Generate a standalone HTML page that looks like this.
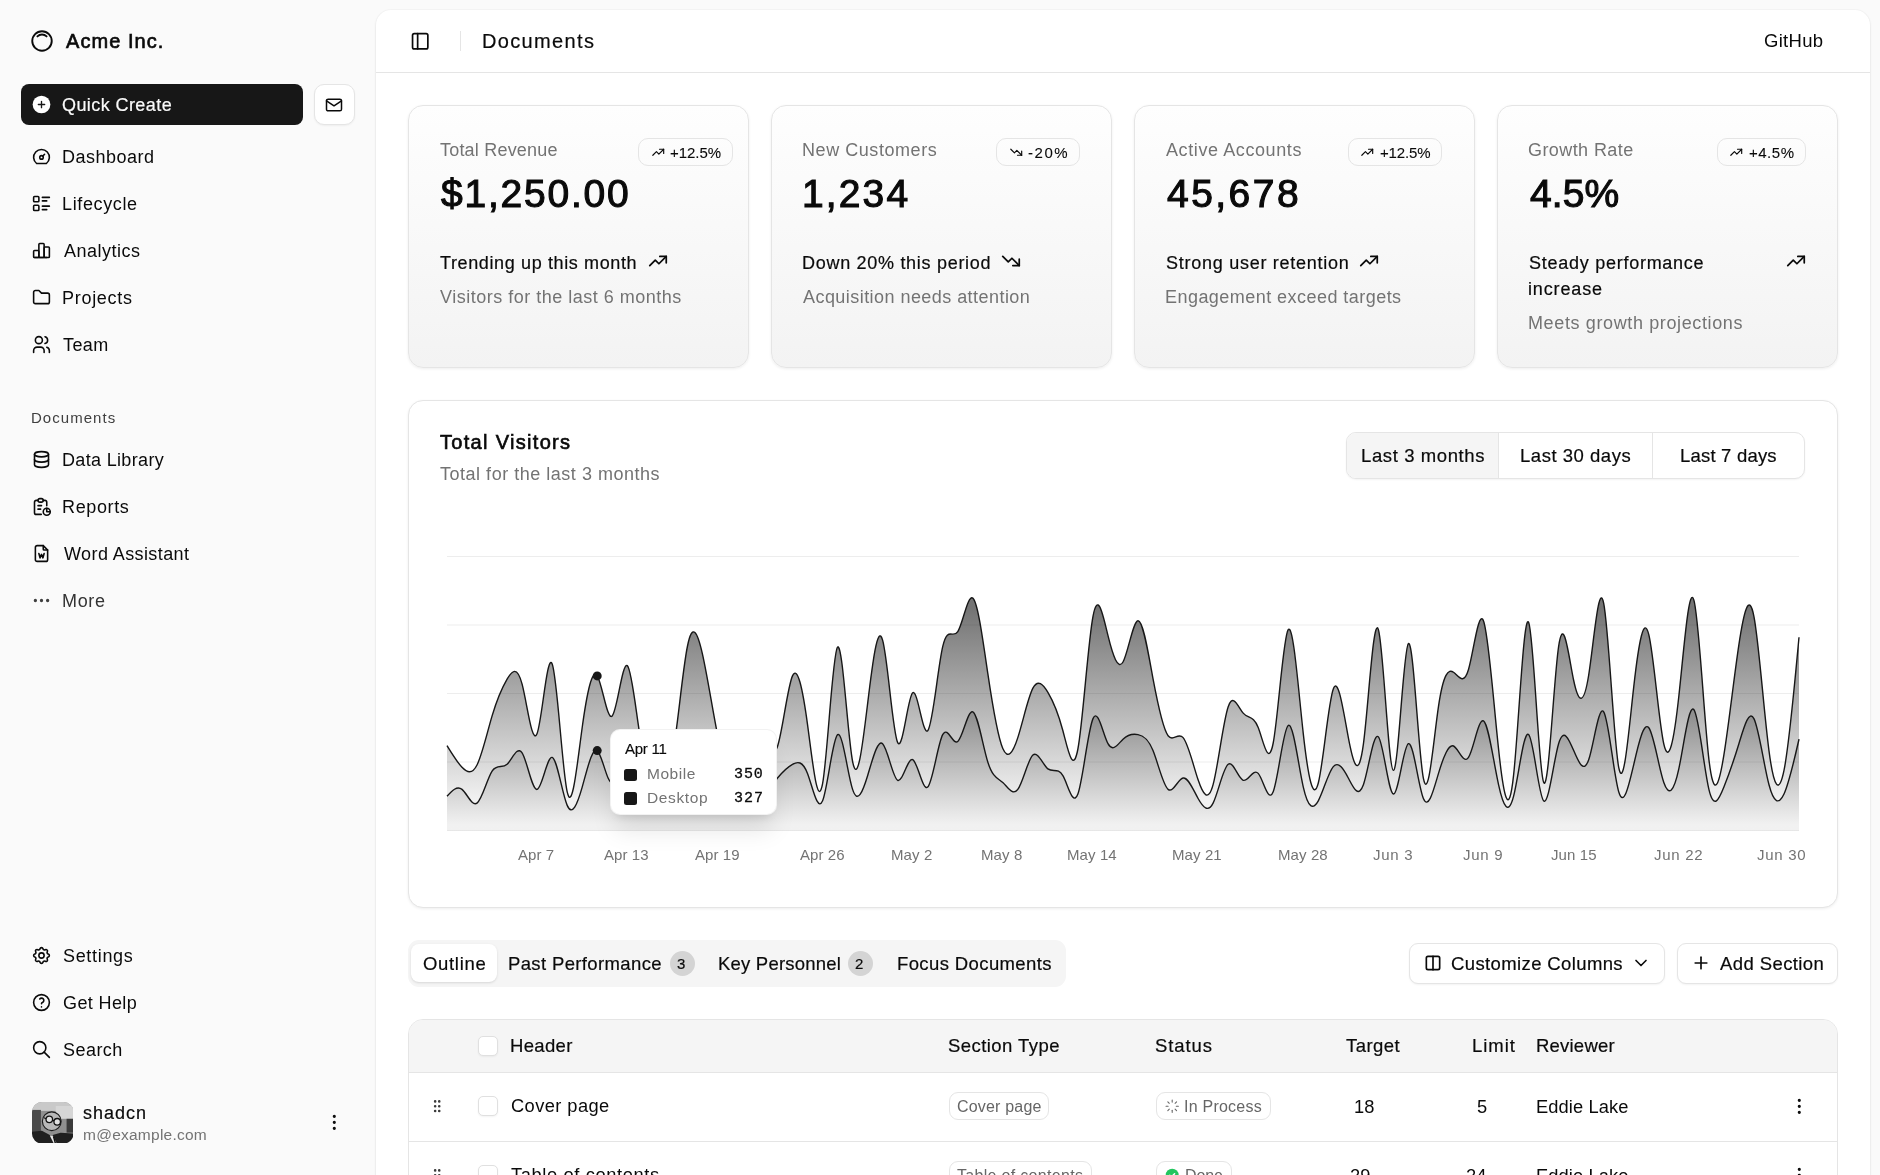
<!DOCTYPE html>
<html><head><meta charset="utf-8"><style>
html,body{margin:0;padding:0;}
body{width:1880px;height:1175px;overflow:hidden;position:relative;background:#fafafa;font-family:"Liberation Sans",sans-serif;color:#0a0a0a;}
.t{position:absolute;white-space:nowrap;line-height:1;will-change:transform;}
#inset{position:absolute;left:376px;top:10px;width:1494px;height:1200px;background:#fff;border-radius:15px;box-shadow:0 1px 3px rgba(0,0,0,.08),0 0 0 1px rgba(0,0,0,.02);}
</style></head><body>
<svg style="position:absolute;left:28.6px;top:27.9px" width="26" height="26" viewBox="0 0 24 24" fill="none" stroke="#0a0a0a" stroke-width="1.75" stroke-linecap="round" stroke-linejoin="round"><path d="M5.636 5.636a9 9 0 1 0 12.728 12.728a9 9 0 0 0 -12.728 -12.728z"/><path d="M16.243 7.757a6 6 0 0 0 -8.486 0"/></svg>
<div class="t" style="left:66.3px;top:31.37px;font-size:20px;color:#0a0a0a;letter-spacing:1.044px;-webkit-text-stroke:0.65px currentColor;">Acme Inc.</div>
<div style="position:absolute;left:21px;top:84px;width:282px;height:41px;background:#171717;border-radius:8px;"></div>
<svg style="position:absolute;left:32.2px;top:94.6px" width="19" height="19" viewBox="0 0 24 24"><circle cx="12" cy="12" r="11.2" fill="#fff"/><path d="M12 8v8M8 12h8" stroke="#171717" stroke-width="1.7" stroke-linecap="round"/></svg>
<div class="t" style="left:62.3px;top:95.56px;font-size:18px;color:#fafafa;letter-spacing:0.419px;-webkit-text-stroke:0.2px currentColor;">Quick Create</div>
<div style="position:absolute;left:313.5px;top:84px;width:41.0px;height:41px;background:#fff;border:1px solid #e5e5e5;box-sizing:border-box;border-radius:10px;box-shadow:0 1px 2px rgba(0,0,0,.05);"></div>
<svg style="position:absolute;left:324.0px;top:94.5px" width="20" height="20" viewBox="0 0 24 24" fill="none" stroke="#0a0a0a" stroke-width="1.8" stroke-linecap="round" stroke-linejoin="round"><path d="M3 7a2 2 0 0 1 2 -2h14a2 2 0 0 1 2 2v10a2 2 0 0 1 -2 2h-14a2 2 0 0 1 -2 -2v-10z"/><path d="M3 7l9 6l9 -6"/></svg>
<svg style="position:absolute;left:30.5px;top:145.5px" width="21" height="21" viewBox="0 0 24 24" fill="none" stroke="#0a0a0a" stroke-width="1.8" stroke-linecap="round" stroke-linejoin="round"><path d="M12 13m-2 0a2 2 0 1 0 4 0a2 2 0 1 0 -4 0"/><path d="M13.45 11.55l2.05 -2.05"/><path d="M6.4 20a9 9 0 1 1 11.2 0z"/></svg>
<div class="t" style="left:62.1px;top:147.86px;font-size:18px;color:#0a0a0a;letter-spacing:0.497px;">Dashboard</div>
<svg style="position:absolute;left:30.5px;top:192.5px" width="21" height="21" viewBox="0 0 24 24" fill="none" stroke="#0a0a0a" stroke-width="1.8" stroke-linecap="round" stroke-linejoin="round"><path d="M13 5h8"/><path d="M13 9h5"/><path d="M13 15h8"/><path d="M13 19h5"/><path d="M3 4m0 1a1 1 0 0 1 1 -1h4a1 1 0 0 1 1 1v4a1 1 0 0 1 -1 1h-4a1 1 0 0 1 -1 -1z"/><path d="M3 14m0 1a1 1 0 0 1 1 -1h4a1 1 0 0 1 1 1v4a1 1 0 0 1 -1 1h-4a1 1 0 0 1 -1 -1z"/></svg>
<div class="t" style="left:62.1px;top:194.86px;font-size:18px;color:#0a0a0a;letter-spacing:0.630px;">Lifecycle</div>
<svg style="position:absolute;left:30.5px;top:239.5px" width="21" height="21" viewBox="0 0 24 24" fill="none" stroke="#0a0a0a" stroke-width="1.8" stroke-linecap="round" stroke-linejoin="round"><path d="M3 13a1 1 0 0 1 1 -1h4a1 1 0 0 1 1 1v6a1 1 0 0 1 -1 1h-4a1 1 0 0 1 -1 -1z"/><path d="M15 9a1 1 0 0 1 1 -1h4a1 1 0 0 1 1 1v10a1 1 0 0 1 -1 1h-4a1 1 0 0 1 -1 -1z"/><path d="M9 5a1 1 0 0 1 1 -1h4a1 1 0 0 1 1 1v14a1 1 0 0 1 -1 1h-4a1 1 0 0 1 -1 -1z"/><path d="M4 20h14"/></svg>
<div class="t" style="left:63.6px;top:241.86px;font-size:18px;color:#0a0a0a;letter-spacing:0.495px;">Analytics</div>
<svg style="position:absolute;left:30.5px;top:286.5px" width="21" height="21" viewBox="0 0 24 24" fill="none" stroke="#0a0a0a" stroke-width="1.8" stroke-linecap="round" stroke-linejoin="round"><path d="M5 4h4l3 3h7a2 2 0 0 1 2 2v8a2 2 0 0 1 -2 2h-14a2 2 0 0 1 -2 -2v-11a2 2 0 0 1 2 -2"/></svg>
<div class="t" style="left:62.1px;top:288.86px;font-size:18px;color:#0a0a0a;letter-spacing:0.715px;">Projects</div>
<svg style="position:absolute;left:30.5px;top:333.5px" width="21" height="21" viewBox="0 0 24 24" fill="none" stroke="#0a0a0a" stroke-width="1.8" stroke-linecap="round" stroke-linejoin="round"><path d="M9 7m-4 0a4 4 0 1 0 8 0a4 4 0 1 0 -8 0"/><path d="M3 21v-2a4 4 0 0 1 4 -4h4a4 4 0 0 1 4 4v2"/><path d="M16 3.13a4 4 0 0 1 0 7.75"/><path d="M21 21v-2a4 4 0 0 0 -3 -3.85"/></svg>
<div class="t" style="left:63.2px;top:335.86px;font-size:18px;color:#0a0a0a;letter-spacing:0.425px;">Team</div>
<div class="t" style="left:31.2px;top:410.10px;font-size:15px;color:#3f3f3f;letter-spacing:1.038px;">Documents</div>
<svg style="position:absolute;left:30.5px;top:449.1px" width="21" height="21" viewBox="0 0 24 24" fill="none" stroke="#0a0a0a" stroke-width="1.8" stroke-linecap="round" stroke-linejoin="round"><path d="M12 6m-8 0a8 3 0 1 0 16 0a8 3 0 1 0 -16 0"/><path d="M4 6v6a8 3 0 0 0 16 0v-6"/><path d="M4 12v6a8 3 0 0 0 16 0v-6"/></svg>
<div class="t" style="left:62.1px;top:451.46px;font-size:18px;color:#0a0a0a;letter-spacing:0.333px;">Data Library</div>
<svg style="position:absolute;left:30.5px;top:496.1px" width="21" height="21" viewBox="0 0 24 24" fill="none" stroke="#0a0a0a" stroke-width="1.8" stroke-linecap="round" stroke-linejoin="round"><path d="M8 5h-2a2 2 0 0 0 -2 2v12a2 2 0 0 0 2 2h5.697"/><path d="M18 14v4h4"/><path d="M18 11v-4a2 2 0 0 0 -2 -2h-2"/><path d="M8 3m0 2a2 2 0 0 1 2 -2h2a2 2 0 0 1 2 2v0a2 2 0 0 1 -2 2h-2a2 2 0 0 1 -2 -2z"/><path d="M18 18m-4 0a4 4 0 1 0 8 0a4 4 0 1 0 -8 0"/><path d="M8 11h4"/><path d="M8 15h3"/></svg>
<div class="t" style="left:62.1px;top:498.46px;font-size:18px;color:#0a0a0a;letter-spacing:0.633px;">Reports</div>
<svg style="position:absolute;left:30.5px;top:543.1px" width="21" height="21" viewBox="0 0 24 24" fill="none" stroke="#0a0a0a" stroke-width="1.8" stroke-linecap="round" stroke-linejoin="round"><path d="M14 3v4a1 1 0 0 0 1 1h4"/><path d="M17 21h-10a2 2 0 0 1 -2 -2v-14a2 2 0 0 1 2 -2h7l5 5v11a2 2 0 0 1 -2 2z"/><path d="M9 12l1.333 5l1.667 -4l1.667 4l1.333 -5"/></svg>
<div class="t" style="left:63.5px;top:545.46px;font-size:18px;color:#0a0a0a;letter-spacing:0.407px;">Word Assistant</div>
<svg style="position:absolute;left:30.5px;top:590.1px" width="21" height="21" viewBox="0 0 24 24" fill="none" stroke="#404040" stroke-width="1.8" stroke-linecap="round" stroke-linejoin="round"><path d="M5 12m-1 0a1 1 0 1 0 2 0a1 1 0 1 0 -2 0"/><path d="M12 12m-1 0a1 1 0 1 0 2 0a1 1 0 1 0 -2 0"/><path d="M19 12m-1 0a1 1 0 1 0 2 0a1 1 0 1 0 -2 0"/></svg>
<div class="t" style="left:62.1px;top:592.46px;font-size:18px;color:#333;letter-spacing:0.655px;">More</div>
<svg style="position:absolute;left:30.5px;top:944.9px" width="21" height="21" viewBox="0 0 24 24" fill="none" stroke="#0a0a0a" stroke-width="1.8" stroke-linecap="round" stroke-linejoin="round"><path d="M10.325 4.317c.426 -1.756 2.924 -1.756 3.35 0a1.724 1.724 0 0 0 2.573 1.066c1.543 -.94 3.31 .826 2.37 2.37a1.724 1.724 0 0 0 1.065 2.572c1.756 .426 1.756 2.924 0 3.35a1.724 1.724 0 0 0 -1.066 2.573c.94 1.543 -.826 3.31 -2.37 2.37a1.724 1.724 0 0 0 -2.572 1.065c-.426 1.756 -2.924 1.756 -3.35 0a1.724 1.724 0 0 0 -2.573 -1.066c-1.543 .94 -3.31 -.826 -2.37 -2.37a1.724 1.724 0 0 0 -1.065 -2.572c-1.756 -.426 -1.756 -2.924 0 -3.35a1.724 1.724 0 0 0 1.066 -2.573c-.94 -1.543 .826 -3.31 2.37 -2.37c1 .608 2.296 .07 2.572 -1.065z"/><path d="M9 12a3 3 0 1 0 6 0a3 3 0 0 0 -6 0"/></svg>
<div class="t" style="left:62.8px;top:947.26px;font-size:18px;color:#0a0a0a;letter-spacing:0.675px;">Settings</div>
<svg style="position:absolute;left:30.5px;top:991.8px" width="21" height="21" viewBox="0 0 24 24" fill="none" stroke="#0a0a0a" stroke-width="1.8" stroke-linecap="round" stroke-linejoin="round"><path d="M12 12m-9 0a9 9 0 1 0 18 0a9 9 0 1 0 -18 0"/><path d="M12 17l0 .01"/><path d="M12 13.5a1.5 1.5 0 0 1 1 -1.5a2.6 2.6 0 1 0 -3 -4"/></svg>
<div class="t" style="left:62.7px;top:994.16px;font-size:18px;color:#0a0a0a;letter-spacing:0.390px;">Get Help</div>
<svg style="position:absolute;left:30.5px;top:1038.7px" width="21" height="21" viewBox="0 0 24 24" fill="none" stroke="#0a0a0a" stroke-width="1.8" stroke-linecap="round" stroke-linejoin="round"><path d="M10 10m-7 0a7 7 0 1 0 14 0a7 7 0 1 0 -14 0"/><path d="M21 21l-6 -6"/></svg>
<div class="t" style="left:62.8px;top:1041.06px;font-size:18px;color:#0a0a0a;letter-spacing:0.450px;">Search</div>
<svg style="position:absolute;left:31.5px;top:1101.5px" width="41.5" height="41.5" viewBox="0 0 42 42"><defs><clipPath id="av"><rect width="42" height="42" rx="10"/></clipPath></defs><g clip-path="url(#av)">
<rect width="42" height="42" fill="#8f8f8f"/><rect width="42" height="9" fill="#c9c9c9"/><rect x="24" y="4" width="18" height="13" fill="#d6d6d6"/>
<rect x="0" y="8" width="9" height="24" fill="#4a4a4a"/><rect x="35" y="17" width="7" height="14" fill="#3a3a3a"/>
<circle cx="20" cy="19.5" r="9.5" fill="#b8b8b8" stroke="#1e1e1e" stroke-width="1.2"/>
<path d="M0 42V30l10 -1l9 5l10 -3l13 1v10z" fill="#202020"/><path d="M18 34l3 0l4 8h-3z" fill="#e8e8e8"/><path d="M21 35l1.5 0l2 7h-1.5z" fill="#111"/>
<circle cx="17.5" cy="17.5" r="3.3" fill="#e0e0e0" stroke="#111" stroke-width="1.3"/><circle cx="25.5" cy="20" r="3.3" fill="#e0e0e0" stroke="#111" stroke-width="1.3"/><path d="M12 16l2.5 1M21 18.5l1.5 .6" stroke="#111" stroke-width="1.2"/>
</g></svg>
<div class="t" style="left:83.3px;top:1103.66px;font-size:18px;color:#0a0a0a;letter-spacing:0.985px;-webkit-text-stroke:0.2px currentColor;">shadcn</div>
<div class="t" style="left:82.8px;top:1126.88px;font-size:15.5px;color:#737373;letter-spacing:0.244px;">m@example.com</div>
<svg style="position:absolute;left:324.1px;top:1112.4px" width="20.6" height="20.6" viewBox="0 0 24 24" fill="none" stroke="#0a0a0a" stroke-width="1.7" stroke-linecap="round" stroke-linejoin="round"><path d="M12 12m-1 0a1 1 0 1 0 2 0a1 1 0 1 0 -2 0"/><path d="M12 19m-1 0a1 1 0 1 0 2 0a1 1 0 1 0 -2 0"/><path d="M12 5m-1 0a1 1 0 1 0 2 0a1 1 0 1 0 -2 0"/></svg>

<div id="inset"></div>
<div style="position:absolute;left:376px;top:72px;width:1494px;height:1px;background:#e5e5e5;"></div>
<svg style="position:absolute;left:410.3px;top:31.3px" width="20.4" height="20.4" viewBox="0 0 24 24" fill="none" stroke="#0a0a0a" stroke-width="2" stroke-linecap="round" stroke-linejoin="round"><rect width="18" height="18" x="3" y="3" rx="2"/><path d="M9 3v18"/></svg>
<div style="position:absolute;left:460px;top:31px;width:1px;height:20px;background:#e5e5e5;"></div>
<div class="t" style="left:481.7px;top:31.17px;font-size:20px;color:#0a0a0a;letter-spacing:1.351px;-webkit-text-stroke:0.2px currentColor;">Documents</div>
<div class="t" style="left:1763.7px;top:32.24px;font-size:18.5px;color:#0a0a0a;letter-spacing:0.286px;">GitHub</div>
<div style="position:absolute;left:408px;top:105px;width:341px;height:263px;box-sizing:border-box;border:1px solid #e5e5e5;border-radius:15px;background:linear-gradient(to top,#f3f3f3,#fefefe);box-shadow:0 1px 3px rgba(0,0,0,.07);"></div>
<div class="t" style="left:439.9px;top:141.16px;font-size:18px;color:#737373;letter-spacing:0.202px;">Total Revenue</div>
<div style="position:absolute;left:638px;top:138px;width:95px;height:28px;box-sizing:border-box;border:1px solid #e5e5e5;border-radius:10px;"></div>
<svg style="position:absolute;left:650.7px;top:144.5px" width="14.5" height="14.5" viewBox="0 0 24 24" fill="none" stroke="#0a0a0a" stroke-width="1.9" stroke-linecap="round" stroke-linejoin="round"><path d="M3 17l6 -6l4 4l8 -8"/><path d="M14 7l7 0l0 7"/></svg>
<div class="t" style="left:670.3px;top:144.50px;font-size:15px;color:#0a0a0a;letter-spacing:-0.025px;-webkit-text-stroke:0.1px currentColor;">+12.5%</div>
<div class="t" style="left:441.1px;top:174.49px;font-size:39px;color:#0a0a0a;letter-spacing:1.767px;-webkit-text-stroke:1.1px currentColor;">$1,250.00</div>
<div class="t" style="left:440.0px;top:253.66px;font-size:18px;color:#0a0a0a;letter-spacing:0.625px;-webkit-text-stroke:0.2px currentColor;">Trending up this month</div>
<svg style="position:absolute;left:646.5px;top:250.0px" width="22" height="22" viewBox="0 0 24 24" fill="none" stroke="#0a0a0a" stroke-width="1.9" stroke-linecap="round" stroke-linejoin="round"><path d="M3 17l6 -6l4 4l8 -8"/><path d="M14 7l7 0l0 7"/></svg>
<div class="t" style="left:440.3px;top:287.56px;font-size:18px;color:#737373;letter-spacing:0.502px;">Visitors for the last 6 months</div>
<div style="position:absolute;left:771px;top:105px;width:341px;height:263px;box-sizing:border-box;border:1px solid #e5e5e5;border-radius:15px;background:linear-gradient(to top,#f3f3f3,#fefefe);box-shadow:0 1px 3px rgba(0,0,0,.07);"></div>
<div class="t" style="left:801.8px;top:141.16px;font-size:18px;color:#737373;letter-spacing:0.558px;">New Customers</div>
<div style="position:absolute;left:996px;top:138px;width:84px;height:28px;box-sizing:border-box;border:1px solid #e5e5e5;border-radius:10px;"></div>
<svg style="position:absolute;left:1008.6px;top:144.5px" width="14.5" height="14.5" viewBox="0 0 24 24" fill="none" stroke="#0a0a0a" stroke-width="1.9" stroke-linecap="round" stroke-linejoin="round"><path d="M3 7l6 6l4 -4l8 8"/><path d="M21 10l0 7l-7 0"/></svg>
<div class="t" style="left:1028.2px;top:144.50px;font-size:15px;color:#0a0a0a;letter-spacing:1.528px;-webkit-text-stroke:0.1px currentColor;">-20%</div>
<div class="t" style="left:801.5px;top:174.49px;font-size:39px;color:#0a0a0a;letter-spacing:2.129px;-webkit-text-stroke:1.1px currentColor;">1,234</div>
<div class="t" style="left:801.9px;top:253.66px;font-size:18px;color:#0a0a0a;letter-spacing:0.707px;-webkit-text-stroke:0.2px currentColor;">Down 20% this period</div>
<svg style="position:absolute;left:1000.1px;top:250.0px" width="22" height="22" viewBox="0 0 24 24" fill="none" stroke="#0a0a0a" stroke-width="1.9" stroke-linecap="round" stroke-linejoin="round"><path d="M3 7l6 6l4 -4l8 8"/><path d="M21 10l0 7l-7 0"/></svg>
<div class="t" style="left:803.4px;top:287.56px;font-size:18px;color:#737373;letter-spacing:0.448px;">Acquisition needs attention</div>
<div style="position:absolute;left:1134px;top:105px;width:341px;height:263px;box-sizing:border-box;border:1px solid #e5e5e5;border-radius:15px;background:linear-gradient(to top,#f3f3f3,#fefefe);box-shadow:0 1px 3px rgba(0,0,0,.07);"></div>
<div class="t" style="left:1166.3px;top:141.16px;font-size:18px;color:#737373;letter-spacing:0.594px;">Active Accounts</div>
<div style="position:absolute;left:1348px;top:138px;width:94px;height:28px;box-sizing:border-box;border:1px solid #e5e5e5;border-radius:10px;"></div>
<svg style="position:absolute;left:1360.4px;top:144.5px" width="14.5" height="14.5" viewBox="0 0 24 24" fill="none" stroke="#0a0a0a" stroke-width="1.9" stroke-linecap="round" stroke-linejoin="round"><path d="M3 17l6 -6l4 4l8 -8"/><path d="M14 7l7 0l0 7"/></svg>
<div class="t" style="left:1380.0px;top:144.50px;font-size:15px;color:#0a0a0a;letter-spacing:-0.145px;-webkit-text-stroke:0.1px currentColor;">+12.5%</div>
<div class="t" style="left:1166.6px;top:174.49px;font-size:39px;color:#0a0a0a;letter-spacing:2.460px;-webkit-text-stroke:1.1px currentColor;">45,678</div>
<div class="t" style="left:1165.6px;top:253.66px;font-size:18px;color:#0a0a0a;letter-spacing:0.734px;-webkit-text-stroke:0.2px currentColor;">Strong user retention</div>
<svg style="position:absolute;left:1358.0px;top:250.0px" width="22" height="22" viewBox="0 0 24 24" fill="none" stroke="#0a0a0a" stroke-width="1.9" stroke-linecap="round" stroke-linejoin="round"><path d="M3 17l6 -6l4 4l8 -8"/><path d="M14 7l7 0l0 7"/></svg>
<div class="t" style="left:1164.9px;top:287.56px;font-size:18px;color:#737373;letter-spacing:0.457px;">Engagement exceed targets</div>
<div style="position:absolute;left:1497px;top:105px;width:341px;height:263px;box-sizing:border-box;border:1px solid #e5e5e5;border-radius:15px;background:linear-gradient(to top,#f3f3f3,#fefefe);box-shadow:0 1px 3px rgba(0,0,0,.07);"></div>
<div class="t" style="left:1528.4px;top:141.16px;font-size:18px;color:#737373;letter-spacing:0.416px;">Growth Rate</div>
<div style="position:absolute;left:1717px;top:138px;width:89px;height:28px;box-sizing:border-box;border:1px solid #e5e5e5;border-radius:10px;"></div>
<svg style="position:absolute;left:1729.0px;top:144.5px" width="14.5" height="14.5" viewBox="0 0 24 24" fill="none" stroke="#0a0a0a" stroke-width="1.9" stroke-linecap="round" stroke-linejoin="round"><path d="M3 17l6 -6l4 4l8 -8"/><path d="M14 7l7 0l0 7"/></svg>
<div class="t" style="left:1748.6px;top:144.50px;font-size:15px;color:#0a0a0a;letter-spacing:0.504px;-webkit-text-stroke:0.1px currentColor;">+4.5%</div>
<div class="t" style="left:1529.6px;top:174.49px;font-size:39px;color:#0a0a0a;letter-spacing:0.131px;-webkit-text-stroke:1.1px currentColor;">4.5%</div>
<div class="t" style="left:1528.6px;top:253.66px;font-size:18px;color:#0a0a0a;letter-spacing:0.737px;-webkit-text-stroke:0.2px currentColor;">Steady performance</div>
<div class="t" style="left:1528.2px;top:279.66px;font-size:18px;color:#0a0a0a;letter-spacing:0.852px;-webkit-text-stroke:0.2px currentColor;">increase</div>
<svg style="position:absolute;left:1784.5px;top:250.0px" width="22" height="22" viewBox="0 0 24 24" fill="none" stroke="#0a0a0a" stroke-width="1.9" stroke-linecap="round" stroke-linejoin="round"><path d="M3 17l6 -6l4 4l8 -8"/><path d="M14 7l7 0l0 7"/></svg>
<div class="t" style="left:1527.9px;top:313.56px;font-size:18px;color:#737373;letter-spacing:0.623px;">Meets growth projections</div>
<div style="position:absolute;left:408px;top:400px;width:1430px;height:508px;box-sizing:border-box;border:1px solid #e5e5e5;border-radius:15px;background:#fff;box-shadow:0 1px 3px rgba(0,0,0,.07);"><svg width="1430" height="508" viewBox="0 0 1430 508" style="position:absolute;left:0;top:0">
<defs>
<linearGradient id="fD" x1="0" y1="0" x2="0" y2="1"><stop offset="5%" stop-color="#171717" stop-opacity="0.6"/><stop offset="95%" stop-color="#171717" stop-opacity="0.06"/></linearGradient>
<linearGradient id="fM" x1="0" y1="0" x2="0" y2="1"><stop offset="5%" stop-color="#171717" stop-opacity="0.48"/><stop offset="95%" stop-color="#171717" stop-opacity="0.06"/></linearGradient>
</defs>
<g stroke="#ededed" stroke-width="1"><line x1="38.0" x2="1390.0" y1="429.5" y2="429.5"/><line x1="38.0" x2="1390.0" y1="361.0" y2="361.0"/><line x1="38.0" x2="1390.0" y1="292.5" y2="292.5"/><line x1="38.0" x2="1390.0" y1="224.0" y2="224.0"/><line x1="38.0" x2="1390.0" y1="155.5" y2="155.5"/></g>
<path d="M38.0,395.2C43.0,389.8,48.0,384.4,53.0,388.4C58.0,392.4,63.0,405.7,68.0,402.1C73.1,398.5,78.1,377.8,83.1,370.1C88.1,362.5,93.1,367.9,98.1,363.3C103.1,358.7,108.1,344.2,113.1,351.9C118.1,359.6,123.1,389.5,128.1,388.4C133.1,387.3,138.1,355.0,143.2,356.4C148.2,357.9,153.2,392.9,158.2,404.4C163.2,415.8,168.2,403.6,173.2,386.1C178.2,368.6,183.2,345.9,188.2,349.6C193.2,353.3,198.2,383.4,203.2,381.5C208.3,379.7,213.3,346.0,218.3,342.7C223.3,339.4,228.3,366.6,233.3,379.3C238.3,392.0,243.3,390.2,248.3,390.7C253.3,391.1,258.3,393.8,263.3,386.1C268.3,378.5,273.3,360.5,278.4,347.3C283.4,334.1,288.4,325.7,293.4,335.9C298.4,346.1,303.4,375.0,308.4,388.4C313.4,401.8,318.4,399.8,323.4,395.2C328.4,390.7,333.4,383.8,338.4,383.8C343.5,383.9,348.5,390.9,353.5,390.7C358.5,390.5,363.5,383.1,368.5,377.0C373.5,370.9,378.5,366.1,383.5,363.3C388.5,360.5,393.5,359.6,398.5,372.4C403.5,385.3,408.5,411.8,413.6,399.8C418.6,387.8,423.6,337.3,428.6,333.6C433.6,329.9,438.6,373.1,443.6,388.4C448.6,403.7,453.6,391.1,458.6,374.7C463.6,358.3,468.6,338.1,473.6,342.7C478.7,347.4,483.7,377.0,488.7,379.3C493.7,381.5,498.7,356.4,503.7,358.7C508.7,361.0,513.7,390.6,518.7,386.1C523.7,381.6,528.7,342.9,533.7,333.6C538.7,324.3,543.7,344.4,548.8,340.5C553.8,336.5,558.8,308.7,563.8,310.8C568.8,312.9,573.8,345.0,578.8,361.0C583.8,377.0,588.8,377.0,593.8,381.5C598.8,386.1,603.8,395.3,608.8,388.4C613.9,381.5,618.9,358.6,623.9,354.1C628.9,349.7,633.9,363.8,638.9,367.9C643.9,371.9,648.9,366.1,653.9,374.7C658.9,383.3,663.9,406.5,668.9,393.0C673.9,379.4,678.9,329.1,684.0,317.6C689.0,306.1,694.0,333.5,699.0,342.7C704.0,351.9,709.0,343.0,714.0,338.2C719.0,333.3,724.0,332.7,729.0,333.6C734.0,334.5,739.0,337.1,744.0,349.6C749.1,362.1,754.1,384.4,759.1,388.4C764.1,392.4,769.1,377.9,774.1,377.0C779.1,376.0,784.1,388.5,789.1,397.5C794.1,406.5,799.1,412.0,804.1,402.1C809.1,392.2,814.1,367.0,819.2,363.3C824.2,359.6,829.2,377.4,834.2,379.3C839.2,381.1,844.2,366.9,849.2,372.4C854.2,377.9,859.2,403.2,864.2,390.7C869.2,378.2,874.2,328.0,879.2,324.5C884.3,320.9,889.3,364.1,894.3,386.1C899.3,408.1,904.3,409.0,909.3,399.8C914.3,390.6,919.3,371.4,924.3,365.6C929.3,359.8,934.3,367.5,939.3,377.0C944.3,386.5,949.3,397.9,954.4,383.8C959.4,369.8,964.4,330.3,969.4,335.9C974.4,341.5,979.4,392.1,984.4,393.0C989.4,393.8,994.4,344.8,999.4,342.7C1004.4,340.6,1009.4,385.4,1014.4,397.5C1019.5,409.6,1024.5,389.1,1029.5,372.4C1034.5,355.7,1039.5,343.0,1044.5,345.0C1049.5,347.1,1054.5,364.0,1059.5,356.4C1064.5,348.9,1069.5,316.9,1074.5,319.9C1079.5,322.9,1084.5,360.9,1089.6,383.8C1094.6,406.8,1099.6,414.7,1104.6,395.2C1109.6,375.8,1114.6,328.9,1119.6,333.6C1124.6,338.3,1129.6,394.5,1134.6,399.8C1139.6,405.1,1144.6,359.6,1149.6,342.7C1154.7,325.9,1159.7,337.7,1164.7,349.6C1169.7,361.4,1174.7,373.2,1179.7,358.7C1184.7,344.2,1189.7,303.3,1194.7,310.8C1199.7,318.2,1204.7,374.0,1209.7,390.7C1214.7,407.4,1219.7,385.0,1224.8,363.3C1229.8,341.5,1234.8,320.4,1239.8,326.8C1244.8,333.1,1249.8,367.0,1254.8,381.5C1259.8,396.1,1264.8,391.2,1269.8,367.9C1274.8,344.5,1279.8,302.8,1284.8,308.5C1289.9,314.2,1294.9,367.3,1299.9,388.4C1304.9,409.5,1309.9,398.7,1314.9,386.1C1319.9,373.5,1324.9,359.1,1329.9,342.7C1334.9,326.4,1339.9,308.0,1344.9,317.6C1349.9,327.2,1354.9,364.7,1360.0,383.8C1365.0,402.9,1370.0,403.6,1375.0,393.0C1380.0,382.3,1385.0,360.2,1390.0,338.2L1390.0,429.5L38.0,429.5Z" fill="url(#fM)"/>
<path d="M38.0,395.2C43.0,389.8,48.0,384.4,53.0,388.4C58.0,392.4,63.0,405.7,68.0,402.1C73.1,398.5,78.1,377.8,83.1,370.1C88.1,362.5,93.1,367.9,98.1,363.3C103.1,358.7,108.1,344.2,113.1,351.9C118.1,359.6,123.1,389.5,128.1,388.4C133.1,387.3,138.1,355.0,143.2,356.4C148.2,357.9,153.2,392.9,158.2,404.4C163.2,415.8,168.2,403.6,173.2,386.1C178.2,368.6,183.2,345.9,188.2,349.6C193.2,353.3,198.2,383.4,203.2,381.5C208.3,379.7,213.3,346.0,218.3,342.7C223.3,339.4,228.3,366.6,233.3,379.3C238.3,392.0,243.3,390.2,248.3,390.7C253.3,391.1,258.3,393.8,263.3,386.1C268.3,378.5,273.3,360.5,278.4,347.3C283.4,334.1,288.4,325.7,293.4,335.9C298.4,346.1,303.4,375.0,308.4,388.4C313.4,401.8,318.4,399.8,323.4,395.2C328.4,390.7,333.4,383.8,338.4,383.8C343.5,383.9,348.5,390.9,353.5,390.7C358.5,390.5,363.5,383.1,368.5,377.0C373.5,370.9,378.5,366.1,383.5,363.3C388.5,360.5,393.5,359.6,398.5,372.4C403.5,385.3,408.5,411.8,413.6,399.8C418.6,387.8,423.6,337.3,428.6,333.6C433.6,329.9,438.6,373.1,443.6,388.4C448.6,403.7,453.6,391.1,458.6,374.7C463.6,358.3,468.6,338.1,473.6,342.7C478.7,347.4,483.7,377.0,488.7,379.3C493.7,381.5,498.7,356.4,503.7,358.7C508.7,361.0,513.7,390.6,518.7,386.1C523.7,381.6,528.7,342.9,533.7,333.6C538.7,324.3,543.7,344.4,548.8,340.5C553.8,336.5,558.8,308.7,563.8,310.8C568.8,312.9,573.8,345.0,578.8,361.0C583.8,377.0,588.8,377.0,593.8,381.5C598.8,386.1,603.8,395.3,608.8,388.4C613.9,381.5,618.9,358.6,623.9,354.1C628.9,349.7,633.9,363.8,638.9,367.9C643.9,371.9,648.9,366.1,653.9,374.7C658.9,383.3,663.9,406.5,668.9,393.0C673.9,379.4,678.9,329.1,684.0,317.6C689.0,306.1,694.0,333.5,699.0,342.7C704.0,351.9,709.0,343.0,714.0,338.2C719.0,333.3,724.0,332.7,729.0,333.6C734.0,334.5,739.0,337.1,744.0,349.6C749.1,362.1,754.1,384.4,759.1,388.4C764.1,392.4,769.1,377.9,774.1,377.0C779.1,376.0,784.1,388.5,789.1,397.5C794.1,406.5,799.1,412.0,804.1,402.1C809.1,392.2,814.1,367.0,819.2,363.3C824.2,359.6,829.2,377.4,834.2,379.3C839.2,381.1,844.2,366.9,849.2,372.4C854.2,377.9,859.2,403.2,864.2,390.7C869.2,378.2,874.2,328.0,879.2,324.5C884.3,320.9,889.3,364.1,894.3,386.1C899.3,408.1,904.3,409.0,909.3,399.8C914.3,390.6,919.3,371.4,924.3,365.6C929.3,359.8,934.3,367.5,939.3,377.0C944.3,386.5,949.3,397.9,954.4,383.8C959.4,369.8,964.4,330.3,969.4,335.9C974.4,341.5,979.4,392.1,984.4,393.0C989.4,393.8,994.4,344.8,999.4,342.7C1004.4,340.6,1009.4,385.4,1014.4,397.5C1019.5,409.6,1024.5,389.1,1029.5,372.4C1034.5,355.7,1039.5,343.0,1044.5,345.0C1049.5,347.1,1054.5,364.0,1059.5,356.4C1064.5,348.9,1069.5,316.9,1074.5,319.9C1079.5,322.9,1084.5,360.9,1089.6,383.8C1094.6,406.8,1099.6,414.7,1104.6,395.2C1109.6,375.8,1114.6,328.9,1119.6,333.6C1124.6,338.3,1129.6,394.5,1134.6,399.8C1139.6,405.1,1144.6,359.6,1149.6,342.7C1154.7,325.9,1159.7,337.7,1164.7,349.6C1169.7,361.4,1174.7,373.2,1179.7,358.7C1184.7,344.2,1189.7,303.3,1194.7,310.8C1199.7,318.2,1204.7,374.0,1209.7,390.7C1214.7,407.4,1219.7,385.0,1224.8,363.3C1229.8,341.5,1234.8,320.4,1239.8,326.8C1244.8,333.1,1249.8,367.0,1254.8,381.5C1259.8,396.1,1264.8,391.2,1269.8,367.9C1274.8,344.5,1279.8,302.8,1284.8,308.5C1289.9,314.2,1294.9,367.3,1299.9,388.4C1304.9,409.5,1309.9,398.7,1314.9,386.1C1319.9,373.5,1324.9,359.1,1329.9,342.7C1334.9,326.4,1339.9,308.0,1344.9,317.6C1349.9,327.2,1354.9,364.7,1360.0,383.8C1365.0,402.9,1370.0,403.6,1375.0,393.0C1380.0,382.3,1385.0,360.2,1390.0,338.2" fill="none" stroke="#171717" stroke-width="1.4"/>
<path d="M38.0,344.6C43.0,352.8,48.0,361.0,53.0,366.3C58.0,371.5,63.0,373.9,68.0,364.0C73.1,354.0,78.1,331.7,83.1,314.9C88.1,298.0,93.1,286.6,98.1,278.1C103.1,269.7,108.1,264.2,113.1,283.1C118.1,302.0,123.1,345.3,128.1,332.5C133.1,319.6,138.1,250.7,143.2,263.0C148.2,275.4,153.2,369.0,158.2,390.9C163.2,412.8,168.2,362.9,173.2,326.5C178.2,290.2,183.2,267.4,188.2,274.9C193.2,282.4,198.2,320.3,203.2,314.9C208.3,309.5,213.3,260.8,218.3,264.6C223.3,268.5,228.3,324.7,233.3,348.0C238.3,371.3,243.3,361.5,248.3,363.3C253.3,365.0,258.3,378.2,263.3,354.6C268.3,331.0,273.3,270.5,278.4,245.5C283.4,220.4,288.4,230.8,293.4,252.8C298.4,274.7,303.4,308.2,308.4,332.9C313.4,357.6,318.4,373.6,323.4,374.9C328.4,376.2,333.4,362.8,338.4,352.6C343.5,342.3,348.5,335.1,353.5,339.5C358.5,344.0,363.5,360.0,368.5,345.5C373.5,331.0,378.5,285.9,383.5,274.9C388.5,263.9,393.5,286.8,398.5,323.3C403.5,359.8,408.5,409.8,413.6,382.7C418.6,355.6,423.6,251.3,428.6,246.1C433.6,241.0,438.6,334.8,443.6,360.5C448.6,386.3,453.6,344.0,458.6,302.8C463.6,261.6,468.6,221.5,473.6,239.1C478.7,256.6,483.7,331.8,488.7,341.6C493.7,351.4,498.7,296.0,503.7,291.8C508.7,287.7,513.7,334.8,518.7,329.7C523.7,324.6,528.7,267.3,533.7,245.7C538.7,224.1,543.7,238.4,548.8,230.6C553.8,222.9,558.8,193.1,563.8,197.1C568.8,201.0,573.8,238.6,578.8,272.4C583.8,306.2,588.8,336.0,593.8,347.5C598.8,359.0,603.8,352.1,608.8,336.6C613.9,321.0,618.9,296.7,623.9,287.2C628.9,277.8,633.9,283.1,638.9,291.4C643.9,299.7,648.9,311.0,653.9,329.7C658.9,348.4,663.9,374.6,668.9,348.0C673.9,321.4,678.9,242.1,684.0,215.3C689.0,188.6,694.0,214.5,699.0,234.7C704.0,255.0,709.0,269.7,714.0,261.0C719.0,252.3,724.0,220.1,729.0,219.7C734.0,219.2,739.0,250.4,744.0,277.7C749.1,304.9,754.1,328.2,759.1,334.7C764.1,341.2,769.1,330.9,774.1,336.6C779.1,342.2,784.1,363.9,789.1,378.8C794.1,393.7,799.1,401.9,804.1,383.6C809.1,365.3,814.1,320.5,819.2,305.7C824.2,291.0,829.2,306.4,834.2,312.1C839.2,317.9,844.2,314.0,849.2,326.5C854.2,339.0,859.2,367.9,864.2,342.0C869.2,316.2,874.2,235.6,879.2,228.6C884.3,221.5,889.3,288.0,894.3,332.9C899.3,377.8,904.3,401.2,909.3,382.0C914.3,362.8,919.3,301.2,924.3,287.9C929.3,274.7,934.3,309.8,939.3,336.3C944.3,362.8,949.3,380.7,954.4,343.2C959.4,305.7,964.4,212.8,969.4,228.6C974.4,244.3,979.4,368.8,984.4,369.4C989.4,370.1,994.4,247.0,999.4,242.5C1004.4,238.0,1009.4,352.2,1014.4,377.4C1019.5,402.7,1024.5,339.0,1029.5,305.3C1034.5,271.6,1039.5,267.8,1044.5,271.3C1049.5,274.7,1054.5,285.3,1059.5,268.5C1064.5,251.7,1069.5,207.5,1074.5,219.9C1079.5,232.3,1084.5,301.4,1089.6,348.4C1094.6,395.5,1099.6,420.4,1104.6,374.2C1109.6,328.1,1114.6,211.0,1119.6,221.3C1124.6,231.5,1129.6,369.3,1134.6,381.3C1139.6,393.4,1144.6,279.8,1149.6,245.5C1154.7,211.1,1159.7,255.9,1164.7,279.5C1169.7,303.0,1174.7,305.3,1179.7,274.0C1184.7,242.7,1189.7,177.9,1194.7,202.3C1199.7,226.7,1204.7,340.4,1209.7,366.3C1214.7,392.1,1219.7,330.1,1224.8,285.4C1229.8,240.8,1234.8,213.5,1239.8,233.6C1244.8,253.7,1249.8,321.1,1254.8,343.0C1259.8,364.8,1264.8,341.1,1269.8,295.5C1274.8,249.9,1279.8,182.4,1284.8,198.9C1289.9,215.4,1294.9,315.9,1299.9,358.3C1304.9,400.6,1309.9,384.9,1314.9,353.9C1319.9,323.0,1324.9,276.9,1329.9,243.6C1334.9,210.4,1339.9,190.0,1344.9,215.3C1349.9,240.6,1354.9,311.5,1360.0,349.8C1365.0,388.1,1370.0,393.8,1375.0,369.4C1380.0,345.1,1385.0,290.7,1390.0,236.3L1390.0,338.2C1385.0,360.2,1380.0,382.3,1375.0,393.0C1370.0,403.6,1365.0,402.9,1360.0,383.8C1354.9,364.7,1349.9,327.2,1344.9,317.6C1339.9,308.0,1334.9,326.4,1329.9,342.7C1324.9,359.1,1319.9,373.5,1314.9,386.1C1309.9,398.7,1304.9,409.5,1299.9,388.4C1294.9,367.3,1289.9,314.2,1284.8,308.5C1279.8,302.8,1274.8,344.5,1269.8,367.9C1264.8,391.2,1259.8,396.1,1254.8,381.5C1249.8,367.0,1244.8,333.1,1239.8,326.8C1234.8,320.4,1229.8,341.5,1224.8,363.3C1219.7,385.0,1214.7,407.4,1209.7,390.7C1204.7,374.0,1199.7,318.2,1194.7,310.8C1189.7,303.3,1184.7,344.2,1179.7,358.7C1174.7,373.2,1169.7,361.4,1164.7,349.6C1159.7,337.7,1154.7,325.9,1149.6,342.7C1144.6,359.6,1139.6,405.1,1134.6,399.8C1129.6,394.5,1124.6,338.3,1119.6,333.6C1114.6,328.9,1109.6,375.8,1104.6,395.2C1099.6,414.7,1094.6,406.8,1089.6,383.8C1084.5,360.9,1079.5,322.9,1074.5,319.9C1069.5,316.9,1064.5,348.9,1059.5,356.4C1054.5,364.0,1049.5,347.1,1044.5,345.0C1039.5,343.0,1034.5,355.7,1029.5,372.4C1024.5,389.1,1019.5,409.6,1014.4,397.5C1009.4,385.4,1004.4,340.6,999.4,342.7C994.4,344.8,989.4,393.8,984.4,393.0C979.4,392.1,974.4,341.5,969.4,335.9C964.4,330.3,959.4,369.8,954.4,383.8C949.3,397.9,944.3,386.5,939.3,377.0C934.3,367.5,929.3,359.8,924.3,365.6C919.3,371.4,914.3,390.6,909.3,399.8C904.3,409.0,899.3,408.1,894.3,386.1C889.3,364.1,884.3,320.9,879.2,324.5C874.2,328.0,869.2,378.2,864.2,390.7C859.2,403.2,854.2,377.9,849.2,372.4C844.2,366.9,839.2,381.1,834.2,379.3C829.2,377.4,824.2,359.6,819.2,363.3C814.1,367.0,809.1,392.2,804.1,402.1C799.1,412.0,794.1,406.5,789.1,397.5C784.1,388.5,779.1,376.0,774.1,377.0C769.1,377.9,764.1,392.4,759.1,388.4C754.1,384.4,749.1,362.1,744.0,349.6C739.0,337.1,734.0,334.5,729.0,333.6C724.0,332.7,719.0,333.3,714.0,338.2C709.0,343.0,704.0,351.9,699.0,342.7C694.0,333.5,689.0,306.1,684.0,317.6C678.9,329.1,673.9,379.4,668.9,393.0C663.9,406.5,658.9,383.3,653.9,374.7C648.9,366.1,643.9,371.9,638.9,367.9C633.9,363.8,628.9,349.7,623.9,354.1C618.9,358.6,613.9,381.5,608.8,388.4C603.8,395.3,598.8,386.1,593.8,381.5C588.8,377.0,583.8,377.0,578.8,361.0C573.8,345.0,568.8,312.9,563.8,310.8C558.8,308.7,553.8,336.5,548.8,340.5C543.7,344.4,538.7,324.3,533.7,333.6C528.7,342.9,523.7,381.6,518.7,386.1C513.7,390.6,508.7,361.0,503.7,358.7C498.7,356.4,493.7,381.5,488.7,379.3C483.7,377.0,478.7,347.4,473.6,342.7C468.6,338.1,463.6,358.3,458.6,374.7C453.6,391.1,448.6,403.7,443.6,388.4C438.6,373.1,433.6,329.9,428.6,333.6C423.6,337.3,418.6,387.8,413.6,399.8C408.5,411.8,403.5,385.3,398.5,372.4C393.5,359.6,388.5,360.5,383.5,363.3C378.5,366.1,373.5,370.9,368.5,377.0C363.5,383.1,358.5,390.5,353.5,390.7C348.5,390.9,343.5,383.9,338.4,383.8C333.4,383.8,328.4,390.7,323.4,395.2C318.4,399.8,313.4,401.8,308.4,388.4C303.4,375.0,298.4,346.1,293.4,335.9C288.4,325.7,283.4,334.1,278.4,347.3C273.3,360.5,268.3,378.5,263.3,386.1C258.3,393.8,253.3,391.1,248.3,390.7C243.3,390.2,238.3,392.0,233.3,379.3C228.3,366.6,223.3,339.4,218.3,342.7C213.3,346.0,208.3,379.7,203.2,381.5C198.2,383.4,193.2,353.3,188.2,349.6C183.2,345.9,178.2,368.6,173.2,386.1C168.2,403.6,163.2,415.8,158.2,404.4C153.2,392.9,148.2,357.9,143.2,356.4C138.1,355.0,133.1,387.3,128.1,388.4C123.1,389.5,118.1,359.6,113.1,351.9C108.1,344.2,103.1,358.7,98.1,363.3C93.1,367.9,88.1,362.5,83.1,370.1C78.1,377.8,73.1,398.5,68.0,402.1C63.0,405.7,58.0,392.4,53.0,388.4C48.0,384.4,43.0,389.8,38.0,395.2Z" fill="url(#fD)"/>
<path d="M38.0,344.6C43.0,352.8,48.0,361.0,53.0,366.3C58.0,371.5,63.0,373.9,68.0,364.0C73.1,354.0,78.1,331.7,83.1,314.9C88.1,298.0,93.1,286.6,98.1,278.1C103.1,269.7,108.1,264.2,113.1,283.1C118.1,302.0,123.1,345.3,128.1,332.5C133.1,319.6,138.1,250.7,143.2,263.0C148.2,275.4,153.2,369.0,158.2,390.9C163.2,412.8,168.2,362.9,173.2,326.5C178.2,290.2,183.2,267.4,188.2,274.9C193.2,282.4,198.2,320.3,203.2,314.9C208.3,309.5,213.3,260.8,218.3,264.6C223.3,268.5,228.3,324.7,233.3,348.0C238.3,371.3,243.3,361.5,248.3,363.3C253.3,365.0,258.3,378.2,263.3,354.6C268.3,331.0,273.3,270.5,278.4,245.5C283.4,220.4,288.4,230.8,293.4,252.8C298.4,274.7,303.4,308.2,308.4,332.9C313.4,357.6,318.4,373.6,323.4,374.9C328.4,376.2,333.4,362.8,338.4,352.6C343.5,342.3,348.5,335.1,353.5,339.5C358.5,344.0,363.5,360.0,368.5,345.5C373.5,331.0,378.5,285.9,383.5,274.9C388.5,263.9,393.5,286.8,398.5,323.3C403.5,359.8,408.5,409.8,413.6,382.7C418.6,355.6,423.6,251.3,428.6,246.1C433.6,241.0,438.6,334.8,443.6,360.5C448.6,386.3,453.6,344.0,458.6,302.8C463.6,261.6,468.6,221.5,473.6,239.1C478.7,256.6,483.7,331.8,488.7,341.6C493.7,351.4,498.7,296.0,503.7,291.8C508.7,287.7,513.7,334.8,518.7,329.7C523.7,324.6,528.7,267.3,533.7,245.7C538.7,224.1,543.7,238.4,548.8,230.6C553.8,222.9,558.8,193.1,563.8,197.1C568.8,201.0,573.8,238.6,578.8,272.4C583.8,306.2,588.8,336.0,593.8,347.5C598.8,359.0,603.8,352.1,608.8,336.6C613.9,321.0,618.9,296.7,623.9,287.2C628.9,277.8,633.9,283.1,638.9,291.4C643.9,299.7,648.9,311.0,653.9,329.7C658.9,348.4,663.9,374.6,668.9,348.0C673.9,321.4,678.9,242.1,684.0,215.3C689.0,188.6,694.0,214.5,699.0,234.7C704.0,255.0,709.0,269.7,714.0,261.0C719.0,252.3,724.0,220.1,729.0,219.7C734.0,219.2,739.0,250.4,744.0,277.7C749.1,304.9,754.1,328.2,759.1,334.7C764.1,341.2,769.1,330.9,774.1,336.6C779.1,342.2,784.1,363.9,789.1,378.8C794.1,393.7,799.1,401.9,804.1,383.6C809.1,365.3,814.1,320.5,819.2,305.7C824.2,291.0,829.2,306.4,834.2,312.1C839.2,317.9,844.2,314.0,849.2,326.5C854.2,339.0,859.2,367.9,864.2,342.0C869.2,316.2,874.2,235.6,879.2,228.6C884.3,221.5,889.3,288.0,894.3,332.9C899.3,377.8,904.3,401.2,909.3,382.0C914.3,362.8,919.3,301.2,924.3,287.9C929.3,274.7,934.3,309.8,939.3,336.3C944.3,362.8,949.3,380.7,954.4,343.2C959.4,305.7,964.4,212.8,969.4,228.6C974.4,244.3,979.4,368.8,984.4,369.4C989.4,370.1,994.4,247.0,999.4,242.5C1004.4,238.0,1009.4,352.2,1014.4,377.4C1019.5,402.7,1024.5,339.0,1029.5,305.3C1034.5,271.6,1039.5,267.8,1044.5,271.3C1049.5,274.7,1054.5,285.3,1059.5,268.5C1064.5,251.7,1069.5,207.5,1074.5,219.9C1079.5,232.3,1084.5,301.4,1089.6,348.4C1094.6,395.5,1099.6,420.4,1104.6,374.2C1109.6,328.1,1114.6,211.0,1119.6,221.3C1124.6,231.5,1129.6,369.3,1134.6,381.3C1139.6,393.4,1144.6,279.8,1149.6,245.5C1154.7,211.1,1159.7,255.9,1164.7,279.5C1169.7,303.0,1174.7,305.3,1179.7,274.0C1184.7,242.7,1189.7,177.9,1194.7,202.3C1199.7,226.7,1204.7,340.4,1209.7,366.3C1214.7,392.1,1219.7,330.1,1224.8,285.4C1229.8,240.8,1234.8,213.5,1239.8,233.6C1244.8,253.7,1249.8,321.1,1254.8,343.0C1259.8,364.8,1264.8,341.1,1269.8,295.5C1274.8,249.9,1279.8,182.4,1284.8,198.9C1289.9,215.4,1294.9,315.9,1299.9,358.3C1304.9,400.6,1309.9,384.9,1314.9,353.9C1319.9,323.0,1324.9,276.9,1329.9,243.6C1334.9,210.4,1339.9,190.0,1344.9,215.3C1349.9,240.6,1354.9,311.5,1360.0,349.8C1365.0,388.1,1370.0,393.8,1375.0,369.4C1380.0,345.1,1385.0,290.7,1390.0,236.3" fill="none" stroke="#171717" stroke-width="1.4"/>
<circle cx="188.2" cy="349.6" r="4.5" fill="#171717"/>
<circle cx="188.2" cy="274.9" r="4.5" fill="#171717"/>
</svg></div>
<div class="t" style="left:440.4px;top:432.27px;font-size:20px;color:#0a0a0a;letter-spacing:1.312px;-webkit-text-stroke:0.65px currentColor;">Total Visitors</div>
<div class="t" style="left:440.1px;top:464.96px;font-size:18px;color:#737373;letter-spacing:0.517px;">Total for the last 3 months</div>
<div style="position:absolute;left:1346px;top:432px;width:459px;height:47px;box-sizing:border-box;border:1px solid #e5e5e5;border-radius:10px;overflow:hidden;background:#fff;box-shadow:0 1px 2px rgba(0,0,0,.05);"><div style="position:absolute;left:0;top:0;width:152px;height:100%;background:#f5f5f5"></div><div style="position:absolute;left:151px;top:0;width:1px;height:100%;background:#e5e5e5"></div><div style="position:absolute;left:305px;top:0;width:1px;height:100%;background:#e5e5e5"></div></div>
<div class="t" style="left:1360.5px;top:446.94px;font-size:18.5px;color:#0a0a0a;letter-spacing:0.607px;-webkit-text-stroke:0.2px currentColor;">Last 3 months</div>
<div class="t" style="left:1519.8px;top:446.94px;font-size:18.5px;color:#0a0a0a;letter-spacing:0.526px;-webkit-text-stroke:0.2px currentColor;">Last 30 days</div>
<div class="t" style="left:1679.8px;top:446.94px;font-size:18.5px;color:#0a0a0a;letter-spacing:0.197px;-webkit-text-stroke:0.2px currentColor;">Last 7 days</div>
<div class="t" style="left:518.4px;top:846.90px;font-size:15px;color:#737373;letter-spacing:0.088px;">Apr 7</div>
<div class="t" style="left:604.3px;top:846.90px;font-size:15px;color:#737373;letter-spacing:0.087px;">Apr 13</div>
<div class="t" style="left:694.5px;top:846.90px;font-size:15px;color:#737373;letter-spacing:0.087px;">Apr 19</div>
<div class="t" style="left:799.7px;top:846.90px;font-size:15px;color:#737373;letter-spacing:0.087px;">Apr 26</div>
<div class="t" style="left:891.0px;top:846.90px;font-size:15px;color:#737373;letter-spacing:0.097px;">May 2</div>
<div class="t" style="left:981.1px;top:846.90px;font-size:15px;color:#737373;letter-spacing:0.097px;">May 8</div>
<div class="t" style="left:1067.0px;top:846.90px;font-size:15px;color:#737373;letter-spacing:0.095px;">May 14</div>
<div class="t" style="left:1172.3px;top:846.90px;font-size:15px;color:#737373;letter-spacing:0.094px;">May 21</div>
<div class="t" style="left:1277.5px;top:846.90px;font-size:15px;color:#737373;letter-spacing:0.095px;">May 28</div>
<div class="t" style="left:1373.2px;top:846.90px;font-size:15px;color:#737373;letter-spacing:0.716px;">Jun 3</div>
<div class="t" style="left:1463.4px;top:846.90px;font-size:15px;color:#737373;letter-spacing:0.715px;">Jun 9</div>
<div class="t" style="left:1550.5px;top:846.90px;font-size:15px;color:#737373;letter-spacing:0.088px;">Jun 15</div>
<div class="t" style="left:1654.3px;top:846.90px;font-size:15px;color:#737373;letter-spacing:0.705px;">Jun 22</div>
<div class="t" style="left:1757.0px;top:846.90px;font-size:15px;color:#737373;letter-spacing:0.707px;">Jun 30</div>
<div style="position:absolute;left:610px;top:729px;width:167px;height:86px;box-sizing:border-box;border:1px solid rgba(229,229,229,.5);border-radius:10px;background:#fff;box-shadow:0 20px 25px -5px rgba(0,0,0,.1),0 8px 10px -6px rgba(0,0,0,.1);"></div>
<div class="t" style="left:624.9px;top:741.20px;font-size:15px;color:#0a0a0a;letter-spacing:-0.264px;-webkit-text-stroke:0.15px currentColor;">Apr 11</div>
<div style="position:absolute;left:624px;top:768.5px;width:13px;height:12.5px;background:#171717;border-radius:2.5px;"></div>
<div style="position:absolute;left:624px;top:792px;width:13px;height:12.5px;background:#171717;border-radius:2.5px;"></div>
<div class="t" style="left:647.2px;top:766.48px;font-size:15.5px;color:#737373;letter-spacing:0.540px;">Mobile</div>
<div class="t" style="left:647.2px;top:790.28px;font-size:15.5px;color:#737373;letter-spacing:0.610px;">Desktop</div>
<div class="t" style="left:734.1px;top:766.90px;font-size:15px;color:#0a0a0a;letter-spacing:0.928px;font-family:'Liberation Mono',monospace;-webkit-text-stroke:0.3px currentColor;">350</div>
<div class="t" style="left:734.1px;top:790.70px;font-size:15px;color:#0a0a0a;letter-spacing:1.053px;font-family:'Liberation Mono',monospace;-webkit-text-stroke:0.3px currentColor;">327</div>
<div style="position:absolute;left:408px;top:940px;width:658px;height:47px;background:#f5f5f5;border-radius:11px;"></div>
<div style="position:absolute;left:411px;top:944px;width:86px;height:38px;background:#fff;border-radius:8px;box-shadow:0 1px 3px rgba(0,0,0,.1),0 1px 2px -1px rgba(0,0,0,.1);"></div>
<div class="t" style="left:422.7px;top:954.74px;font-size:18.5px;color:#0a0a0a;letter-spacing:0.680px;-webkit-text-stroke:0.2px currentColor;">Outline</div>
<div class="t" style="left:507.9px;top:954.74px;font-size:18.5px;color:#0a0a0a;letter-spacing:0.365px;-webkit-text-stroke:0.2px currentColor;">Past Performance</div>
<div style="position:absolute;left:670px;top:951px;width:25px;height:25px;background:#d4d4d4;border-radius:50%;"></div>
<div class="t" style="left:676.9px;top:956.30px;font-size:15px;color:#0a0a0a;-webkit-text-stroke:0.2px currentColor;">3</div>
<div class="t" style="left:718.2px;top:954.74px;font-size:18.5px;color:#0a0a0a;letter-spacing:0.211px;-webkit-text-stroke:0.2px currentColor;">Key Personnel</div>
<div style="position:absolute;left:848px;top:951px;width:25px;height:25px;background:#d4d4d4;border-radius:50%;"></div>
<div class="t" style="left:855.2px;top:956.30px;font-size:15px;color:#0a0a0a;-webkit-text-stroke:0.2px currentColor;">2</div>
<div class="t" style="left:896.5px;top:954.74px;font-size:18.5px;color:#0a0a0a;letter-spacing:0.386px;-webkit-text-stroke:0.2px currentColor;">Focus Documents</div>
<div style="position:absolute;left:1409px;top:943px;width:256px;height:41px;box-sizing:border-box;border:1px solid #e5e5e5;border-radius:9px;background:#fff;box-shadow:0 1px 2px rgba(0,0,0,.05);"></div>
<svg style="position:absolute;left:1423.0px;top:953.0px" width="20" height="20" viewBox="0 0 24 24" fill="none" stroke="#0a0a0a" stroke-width="2" stroke-linecap="round" stroke-linejoin="round"><path d="M4 4m0 2a2 2 0 0 1 2 -2h12a2 2 0 0 1 2 2v12a2 2 0 0 1 -2 2h-12a2 2 0 0 1 -2 -2z"/><path d="M12 4l0 16"/></svg>
<div class="t" style="left:1451.4px;top:954.74px;font-size:18.5px;color:#0a0a0a;letter-spacing:0.380px;-webkit-text-stroke:0.2px currentColor;">Customize Columns</div>
<svg style="position:absolute;left:1631.0px;top:953.0px" width="20" height="20" viewBox="0 0 24 24" fill="none" stroke="#0a0a0a" stroke-width="2" stroke-linecap="round" stroke-linejoin="round"><path d="M6 9l6 6l6 -6"/></svg>
<div style="position:absolute;left:1677px;top:943px;width:161px;height:41px;box-sizing:border-box;border:1px solid #e5e5e5;border-radius:9px;background:#fff;box-shadow:0 1px 2px rgba(0,0,0,.05);"></div>
<svg style="position:absolute;left:1690.5px;top:953.0px" width="20" height="20" viewBox="0 0 24 24" fill="none" stroke="#0a0a0a" stroke-width="2" stroke-linecap="round" stroke-linejoin="round"><path d="M12 5l0 14"/><path d="M5 12l14 0"/></svg>
<div class="t" style="left:1720.4px;top:954.74px;font-size:18.5px;color:#0a0a0a;letter-spacing:0.407px;-webkit-text-stroke:0.2px currentColor;">Add Section</div>
<div style="position:absolute;left:408px;top:1019px;width:1430px;height:181px;box-sizing:border-box;border:1px solid #e5e5e5;border-radius:15px;overflow:hidden;background:#fff;"><div style="position:absolute;left:0;top:0;right:0;height:52px;background:#f5f5f5;border-bottom:1px solid #e5e5e5"></div><div style="position:absolute;left:0;top:121px;right:0;height:1px;background:#e5e5e5"></div></div>
<div style="position:absolute;left:478px;top:1035.5px;width:20px;height:20.0px;box-sizing:border-box;border:1px solid #e0e0e0;border-radius:5px;background:#fff;box-shadow:0 1px 2px rgba(0,0,0,.05);"></div>
<div class="t" style="left:509.9px;top:1036.94px;font-size:18.5px;color:#0a0a0a;letter-spacing:0.349px;-webkit-text-stroke:0.2px currentColor;">Header</div>
<div class="t" style="left:947.5px;top:1036.94px;font-size:18.5px;color:#0a0a0a;letter-spacing:0.440px;-webkit-text-stroke:0.2px currentColor;">Section Type</div>
<div class="t" style="left:1155.2px;top:1036.94px;font-size:18.5px;color:#0a0a0a;letter-spacing:0.892px;-webkit-text-stroke:0.2px currentColor;">Status</div>
<div class="t" style="left:1346.4px;top:1036.94px;font-size:18.5px;color:#0a0a0a;letter-spacing:0.467px;-webkit-text-stroke:0.2px currentColor;">Target</div>
<div class="t" style="left:1472.3px;top:1036.94px;font-size:18.5px;color:#0a0a0a;letter-spacing:0.948px;-webkit-text-stroke:0.2px currentColor;">Limit</div>
<div class="t" style="left:1536.0px;top:1036.94px;font-size:18.5px;color:#0a0a0a;letter-spacing:0.216px;-webkit-text-stroke:0.2px currentColor;">Reviewer</div>
<svg style="position:absolute;left:429.1px;top:1098.3px" width="16.4" height="16.4" viewBox="0 0 24 24" fill="none" stroke="#3a3a3a" stroke-width="1.8" stroke-linecap="round" stroke-linejoin="round"><path d="M9 5m-1 0a1 1 0 1 0 2 0a1 1 0 1 0 -2 0"/><path d="M9 12m-1 0a1 1 0 1 0 2 0a1 1 0 1 0 -2 0"/><path d="M9 19m-1 0a1 1 0 1 0 2 0a1 1 0 1 0 -2 0"/><path d="M15 5m-1 0a1 1 0 1 0 2 0a1 1 0 1 0 -2 0"/><path d="M15 12m-1 0a1 1 0 1 0 2 0a1 1 0 1 0 -2 0"/><path d="M15 19m-1 0a1 1 0 1 0 2 0a1 1 0 1 0 -2 0"/></svg>
<div style="position:absolute;left:478px;top:1096.3px;width:20px;height:20.0px;box-sizing:border-box;border:1px solid #e0e0e0;border-radius:5px;background:#fff;box-shadow:0 1px 2px rgba(0,0,0,.05);"></div>
<div class="t" style="left:510.8px;top:1097.41px;font-size:18.3px;color:#0a0a0a;letter-spacing:0.414px;">Cover page</div>
<div style="position:absolute;left:949px;top:1092.3px;width:100.40000000000009px;height:28.0px;box-sizing:border-box;border:1px solid #e5e5e5;border-radius:9px;"></div>
<div class="t" style="left:956.7px;top:1098.66px;font-size:16px;color:#666;letter-spacing:0.189px;">Cover page</div>
<div style="position:absolute;left:1156px;top:1092.3px;width:115px;height:28.0px;box-sizing:border-box;border:1px solid #e5e5e5;border-radius:9px;"></div>
<svg style="position:absolute;left:1164.3px;top:1098.3px" width="16.4" height="16.4" viewBox="0 0 24 24" fill="none" stroke="#666" stroke-width="1.6" stroke-linecap="round" stroke-linejoin="round"><path d="M12 6l0 -3"/><path d="M16.25 7.75l2.15 -2.15"/><path d="M18 12l3 0"/><path d="M16.25 16.25l2.15 2.15"/><path d="M12 18l0 3"/><path d="M7.75 16.25l-2.15 2.15"/><path d="M6 12l-3 0"/><path d="M7.75 7.75l-2.15 -2.15"/></svg>
<div class="t" style="left:1184.4px;top:1098.66px;font-size:16px;color:#666;letter-spacing:0.230px;">In Process</div>
<div class="t" style="left:1353.8px;top:1097.51px;font-size:18.3px;color:#0a0a0a;">18</div>
<div class="t" style="left:1476.6px;top:1097.51px;font-size:18.3px;color:#0a0a0a;">5</div>
<div class="t" style="left:1536.0px;top:1097.51px;font-size:18.3px;color:#0a0a0a;letter-spacing:0.093px;">Eddie Lake</div>
<svg style="position:absolute;left:1788.7px;top:1096.3px" width="20.6" height="20.6" viewBox="0 0 24 24" fill="none" stroke="#0a0a0a" stroke-width="1.7" stroke-linecap="round" stroke-linejoin="round"><path d="M12 12m-1 0a1 1 0 1 0 2 0a1 1 0 1 0 -2 0"/><path d="M12 19m-1 0a1 1 0 1 0 2 0a1 1 0 1 0 -2 0"/><path d="M12 5m-1 0a1 1 0 1 0 2 0a1 1 0 1 0 -2 0"/></svg>
<svg style="position:absolute;left:429.1px;top:1167.3px" width="16.4" height="16.4" viewBox="0 0 24 24" fill="none" stroke="#3a3a3a" stroke-width="1.8" stroke-linecap="round" stroke-linejoin="round"><path d="M9 5m-1 0a1 1 0 1 0 2 0a1 1 0 1 0 -2 0"/><path d="M9 12m-1 0a1 1 0 1 0 2 0a1 1 0 1 0 -2 0"/><path d="M9 19m-1 0a1 1 0 1 0 2 0a1 1 0 1 0 -2 0"/><path d="M15 5m-1 0a1 1 0 1 0 2 0a1 1 0 1 0 -2 0"/><path d="M15 12m-1 0a1 1 0 1 0 2 0a1 1 0 1 0 -2 0"/><path d="M15 19m-1 0a1 1 0 1 0 2 0a1 1 0 1 0 -2 0"/></svg>
<div style="position:absolute;left:478px;top:1165.3px;width:20px;height:20.0px;box-sizing:border-box;border:1px solid #e0e0e0;border-radius:5px;background:#fff;box-shadow:0 1px 2px rgba(0,0,0,.05);"></div>
<div class="t" style="left:511.3px;top:1166.41px;font-size:18.3px;color:#0a0a0a;letter-spacing:0.620px;">Table of contents</div>
<div style="position:absolute;left:949px;top:1161.3px;width:143.29999999999995px;height:28.0px;box-sizing:border-box;border:1px solid #e5e5e5;border-radius:9px;"></div>
<div class="t" style="left:957.1px;top:1167.66px;font-size:16px;color:#666;letter-spacing:0.310px;">Table of contents</div>
<div style="position:absolute;left:1156px;top:1161.3px;width:76px;height:28.0px;box-sizing:border-box;border:1px solid #e5e5e5;border-radius:9px;"></div>
<svg style="position:absolute;left:1164.3px;top:1167.3px" width="16.4" height="16.4" viewBox="0 0 24 24"><circle cx="12" cy="12" r="9.5" fill="#22c55e"/><path d="M8.5 12.2l2.4 2.4l4.6 -4.8" stroke="#fff" stroke-width="2.2" fill="none" stroke-linecap="round" stroke-linejoin="round"/></svg>
<div class="t" style="left:1184.6px;top:1167.66px;font-size:16px;color:#666;letter-spacing:-0.076px;">Done</div>
<div class="t" style="left:1350.3px;top:1166.51px;font-size:18.3px;color:#0a0a0a;">29</div>
<div class="t" style="left:1466.1px;top:1166.51px;font-size:18.3px;color:#0a0a0a;">24</div>
<div class="t" style="left:1536.0px;top:1166.51px;font-size:18.3px;color:#0a0a0a;letter-spacing:0.093px;">Eddie Lake</div>
<svg style="position:absolute;left:1788.7px;top:1165.3px" width="20.6" height="20.6" viewBox="0 0 24 24" fill="none" stroke="#0a0a0a" stroke-width="1.7" stroke-linecap="round" stroke-linejoin="round"><path d="M12 12m-1 0a1 1 0 1 0 2 0a1 1 0 1 0 -2 0"/><path d="M12 19m-1 0a1 1 0 1 0 2 0a1 1 0 1 0 -2 0"/><path d="M12 5m-1 0a1 1 0 1 0 2 0a1 1 0 1 0 -2 0"/></svg>

</body></html>
